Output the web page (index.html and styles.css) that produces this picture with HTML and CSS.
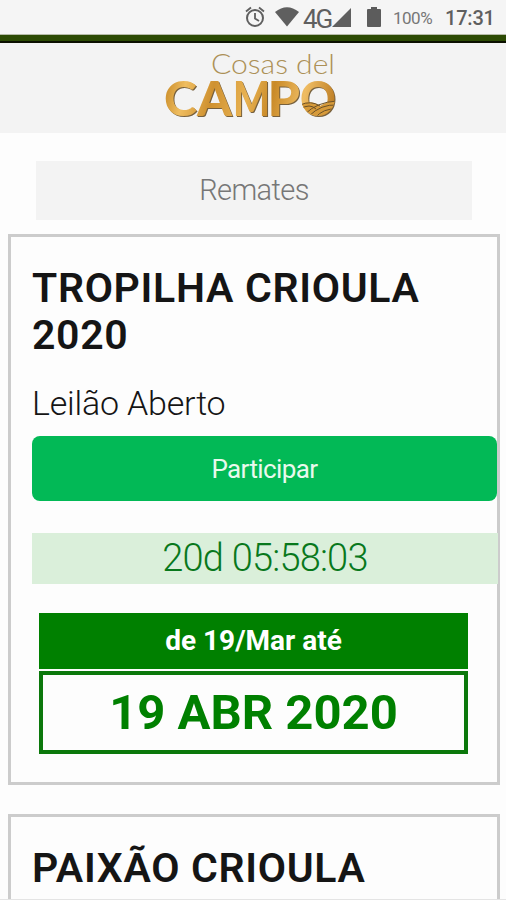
FILE: index.html
```html
<!DOCTYPE html>
<html lang="pt-BR">
<head>
<meta charset="utf-8">
<meta name="viewport" content="width=device-width, initial-scale=1">
<title>Cosas del Campo</title>
<link rel="stylesheet" href="styles.css">
</head>
<body>
<div class="screen">
  <div class="status">
    <svg class="alarm" width="20" height="22" viewBox="0 0 20 22" fill="none" stroke="#5f5f5f" stroke-width="2">
      <circle cx="10" cy="13" r="8"/><path d="M10 8v5.500l4 2.500M1 6.500l5-4M19 6.500l-5-4" stroke-width="1.800"/>
    </svg>
    <svg class="wifi" width="24" height="20" viewBox="0 0 24 20"><path d="M0 5Q12-4.500 24 5L12 19.500Z" fill="#5f5f5f"/></svg>
    <span class="net">4G</span>
    <svg class="signal" width="19" height="19" viewBox="0 0 19 19"><path d="M19 0V19H0Z" fill="#5f5f5f"/></svg>
    <svg class="battery" width="14" height="20" viewBox="0 0 14 20"><path d="M4 0h6v2h3q1 0 1 1v16q0 1-1 1H1q-1 0-1-1V3q0-1 1-1h3Z" fill="#5c5c5c"/></svg>
    <span class="percent">100%</span>
    <span class="clock">17:31</span>
  </div>
  <div class="strip"></div>
  <header class="header">
    <svg class="logo" width="180" height="74" viewBox="160 48 180 74" role="img" aria-label="Cosas del Campo">
      <defs>
        <linearGradient id="gold" x1="165" y1="80" x2="335" y2="118" gradientUnits="userSpaceOnUse">
          <stop offset="0" stop-color="#c88a26"/><stop offset=".12" stop-color="#efbd60"/><stop offset=".28" stop-color="#cf9130"/>
          <stop offset=".48" stop-color="#e8b252"/><stop offset=".62" stop-color="#c98a28"/><stop offset=".8" stop-color="#efbc62"/><stop offset="1" stop-color="#b7761d"/>
        </linearGradient>
        <clipPath id="field"><circle cx="318" cy="98.500" r="17"/></clipPath>
      </defs>
      <text class="logo-top" x="211" y="73.500" textLength="124" lengthAdjust="spacingAndGlyphs" fill="#ac9056">Cosas del</text>
      <g class="logo-main">
        <text x="164" y="115.500" textLength="33" lengthAdjust="spacingAndGlyphs">C</text>
        <text x="197" y="115.500" textLength="35" lengthAdjust="spacingAndGlyphs">A</text>
        <text x="233" y="115.500" textLength="37" lengthAdjust="spacingAndGlyphs">M</text>
        <text x="267.500" y="115.500" textLength="32.500" lengthAdjust="spacingAndGlyphs">P</text>
        <text x="300" y="115.500" textLength="36" lengthAdjust="spacingAndGlyphs">O</text>
      </g>
      <g clip-path="url(#field)" fill="none" stroke="#6b5128" stroke-width="1">
        <path d="M300 105q11-6 20 1q7-5 16-5v20h-36Z" fill="#d69a3a" stroke="none"/>
        <path d="M300 105q11-5 20 1M300 109q10-6 16 0M305 114q12-12 32-13M309 116q12-12 28-11M315 118q8-10 22-9"/>
      </g>
    </svg>
  </header>
  <main>
    <h1 class="heading">Remates</h1>
    <article class="card">
      <h2 class="title">TROPILHA CRIOULA<br>2020</h2>
      <p class="state">Leilão Aberto</p>
      <button class="join">Participar</button>
      <div class="timer">20d 05:58:03</div>
      <div class="from">de 19/Mar até</div>
      <div class="until">19 ABR 2020</div>
    </article>
    <article class="card">
      <h2 class="title">PAIXÃO CRIOULA</h2>
    </article>
  </main>
</div>
</body>
</html>
```
FILE: styles.css
```css
* { box-sizing: border-box; }
body { margin: 0; background: #fdfdfd; color: #151515; font-family: Roboto, "Liberation Sans", sans-serif; }
.screen { height: 900px; overflow: hidden; border-bottom: 1px solid #e4e4e4; }
.status { height: 34px; background: #f5f5f5; display: flex; align-items: flex-start; padding-left: 245px; color: #5f5f5f; }
.status svg, .status span { flex: none; }
.status span { white-space: nowrap; line-height: 24px; }
.alarm { margin-top: 5px; }
.wifi { margin: 7px 0 0 10px; }
.net { width: 29px; margin: 7px 0 0 4px; font-size: 26px; letter-spacing: -2px; }
.signal { margin-top: 8px; }
.battery { margin: 7px 0 0 16px; }
.percent { width: 41px; margin: 6px 0 0 12px; font-size: 17px; letter-spacing: -.5px; color: #777; }
.clock { margin: 6px 0 0 11px; font-size: 20px; font-weight: 500; letter-spacing: -.2px; }
.strip { height: 9px; background: #2c4a04; border-top: 1px solid #b5bba9; border-bottom: 2px solid #0b1000; }
.header { height: 90px; background: #f3f3f3; display: flex; justify-content: center; padding: 5px 6px 0 0; }
.logo { display: block; }
.logo-top { font: 300 28px Lato, sans-serif; }
.logo-main { font: 900 47px Lato, sans-serif; fill: url(#gold); filter: drop-shadow(1px 1px .3px #76603e); }
main { padding: 28px 6px 0 8px; }
.heading { height: 59px; margin: 0 28px 14px; background: #f3f3f3; color: #777; font-size: 29px; font-weight: 300; letter-spacing: -.6px; line-height: 58px; text-align: center; }
.card { height: 551px; margin-bottom: 29px; border: 3px solid #ccc; padding: 28px 0 0 21px; }
.title { margin: 0; font-size: 41px; line-height: 47px; font-weight: 600; letter-spacing: .7px; white-space: nowrap; }
.state { margin: 24px 0 0; font-size: 34px; font-weight: 300; letter-spacing: -.2px; line-height: 40px; }
.join { display: block; width: 465px; height: 65px; margin: 13px 0 32px; padding: 0; border: 0; border-radius: 8px; background: #02b956; color: #e9f9ed; font: 400 26px Roboto, sans-serif; letter-spacing: -.6px; }
.timer { width: 466px; height: 51px; background: #daefda; color: #08781c; font-size: 38px; font-weight: 300; letter-spacing: -.8px; line-height: 51px; text-align: center; }
.from { width: 429px; height: 56px; margin: 29px 0 2px 7px; background: #008000; color: #fff; font-size: 28px; font-weight: 700; line-height: 55px; text-align: center; }
.until { width: 429px; height: 83px; margin-left: 7px; border: 4px solid #0b780b; color: #008000; font-size: 49px; font-weight: 700; line-height: 76px; text-align: center; }
```
